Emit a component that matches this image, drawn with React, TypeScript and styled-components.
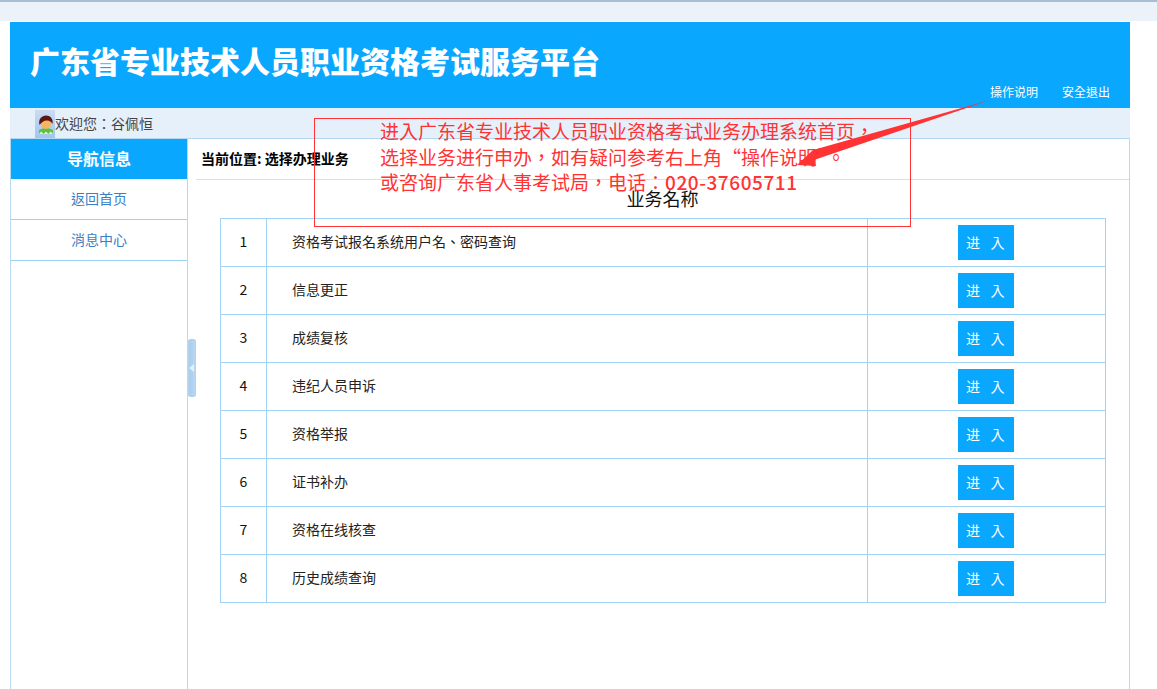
import React from "react";
import styled, { createGlobalStyle } from "styled-components";

const Global = createGlobalStyle`
  html, body { margin: 0; padding: 0; background: #fff; height: 689px; overflow: hidden; }
  body { font-family: "Noto Sans CJK TC", "Noto Sans CJK SC", "Liberation Sans", sans-serif; }
  * { box-sizing: border-box; }
`;
const Page = styled.div`position: relative; width: 1157px; height: 689px; overflow: hidden;`;
const TopStrip = styled.div`height: 21px; background: #ecf2fa; border-top: 2px solid #a9bdd3;`;
const Frame = styled.div`
  margin: 1px 27px 0 10px; height: 667px; display: flex; flex-direction: column;
`;
const Header = styled.header`
  height: 86px; flex: none; background: #0aa7ff; position: relative; padding: 21px 0 0 20px;
  display: flex; justify-content: space-between;
`;
const Title = styled.h1`margin: 0; font-size: 30px; line-height: 34px; font-weight: 900; color: #fff;`;
const Links = styled.nav`align-self: flex-end; display: flex; gap: 24px; padding: 0 20px 8px 0;`;
const TopLink = styled.span`font-size: 12px; line-height: 16px; color: #fff;`;
const WelcomeBar = styled.div`
  height: 31px; flex: none; background: #e6f0fb; border-bottom: 1px solid #b3d9f2;
  display: flex; align-items: flex-start; padding-left: 25px;
`;
const Avatar = styled.span`
  width: 20px; height: 28px; margin-top: 2px; display: block;
  background: linear-gradient(#c9dcf3, #a3c5ee);
`;
const Welcome = styled.span`font-size: 14px; line-height: 30px; color: #444;`;
const Body = styled.div`flex: 1; display: flex; min-height: 0; border-right: 1px solid #b7d9f1;`;
const Side = styled.aside`width: 178px; flex: none; border-left: 1px solid #b7d9f1; border-right: 1px solid #b7d9f1;`;
const NavHead = styled.div`
  height: 40px; background: #0aa7ff; color: #fff; font-size: 16px; font-weight: 700; padding-bottom: 2px;
  display: flex; align-items: center; justify-content: center;
`;
const NavItem = styled.div`
  height: 41px; border-bottom: 1px solid #9fd2f3; color: #3b7fc4; font-size: 14px; padding-bottom: 2px;
  display: flex; align-items: center; justify-content: center;
`;
const Main = styled.main`flex: 1; min-width: 0; padding-left: 8px;`;
const Crumb = styled.div`
  height: 41px; border-bottom: 1px solid #dcdfe2; padding-left: 5px; color: #000;
  font-size: 14px; font-weight: 700; line-height: 38px;
`;
const TableWrap = styled.div`padding: 0 24px 0 24px;`;
const Caption = styled.div`height: 38px; text-align: center; font-size: 18px; line-height: 37px; color: #111;`;
const Table = styled.table`width: 886px; border-collapse: collapse; table-layout: fixed;`;
const Row = styled.tr`height: 48px;`;
const Cell = styled.td<{ $w?: number; $align?: string; $pad?: number }>`
  border: 1px solid #9fd2f3; padding: 0 0 3px ${p => p.$pad ?? 0}px; font-size: 14px; color: #222;
  width: ${p => (p.$w ? `${p.$w}px` : "auto")}; text-align: ${p => p.$align ?? "left"};
`;
const ActionCell = styled(Cell)`padding-bottom: 0;`;
const NumText = styled.span`font-size: 14px; color: #111;`;
const Enter = styled.button`
  width: 56px; height: 35px; border: 0; padding: 0 0 2px; margin-left: -1px; background: #0aa7ff; color: #fff;
  font: 14px "Noto Sans CJK TC", "Noto Sans CJK SC", sans-serif; letter-spacing: 1.4px; white-space: pre; display: inline-block; vertical-align: middle;
`;
const Handle = styled.div`
  position: absolute; left: 188px; top: 339px; width: 8px; height: 58px; border-radius: 2px;
  background: linear-gradient(90deg, #a8cdf0, #b9d6f3); border: 1px solid #b3d3ef;
  display: flex; align-items: center; justify-content: center;
`;
const HandleArrow = styled.span`
  width: 0; height: 0; border-top: 4px solid transparent; border-bottom: 4px solid transparent;
  border-right: 5px solid #e6f0fb; margin-left: -1px;
`;
const Note = styled.div`
  position: absolute; left: 314px; top: 118px; width: 597px; height: 109px;
  border: 1px solid #f33; padding: 0 0 0 65px; color: #f33; font-size: 19px; line-height: 25.5px; white-space: nowrap;
`;
const NoteText = styled.div`margin-top: -1px;`;
const Phone = styled.span`font-weight: 500; letter-spacing: 0.55px;`;
const ArrowSvg = styled.svg`position: absolute; left: 780px; top: 90px; width: 220px; height: 100px; pointer-events: none;`;

const rows = ["资格考试报名系统用户名、密码查询", "信息更正", "成绩复核", "违纪人员申诉", "资格举报", "证书补办", "资格在线核查", "历史成绩查询"];

export default function App() {
  return (
    <Page>
      <Global />
      <TopStrip />
      <Frame>
        <Header>
          <Title>广东省专业技术人员职业资格考试服务平台</Title>
          <Links>
            <TopLink>操作说明</TopLink>
            <TopLink>安全退出</TopLink>
          </Links>
        </Header>
        <WelcomeBar>
          <Avatar>
            <svg width="20" height="28" viewBox="0 0 20 28">
              <path d="M4 24v-4c2-1 4-2 7-2s5 1 7 2v4z" fill="#5fc23c" />
              <path d="M4 24l2.300-2.500 2.300 2.500 2.400-2.500 2.400 2.500 2.300-2.500 2.300 2.500z" fill="#e4f6cf" />
              <circle cx="11" cy="14" r="5" fill="#f8b45e" />
              <path d="M4.500 15c-1.500-6 2.500-9.500 6.500-9.500s7.500 3 6.500 8.500c-1.500-2.500-3.500-4-6-3.500-2.500 0-5 1.800-7 4.500z" fill="#5a1714" />
            </svg>
          </Avatar>
          <Welcome>欢迎您：谷佩恒</Welcome>
        </WelcomeBar>
        <Body>
          <Side>
            <NavHead>导航信息</NavHead>
            <NavItem>返回首页</NavItem>
            <NavItem>消息中心</NavItem>
          </Side>
          <Main>
            <Crumb>当前位置: 选择办理业务</Crumb>
            <TableWrap>
              <Caption>业务名称</Caption>
              <Table>
                <tbody>
                  {rows.map((r, i) => (
                    <Row key={r}>
                      <Cell $w={46} $align="center"><NumText>{i + 1}</NumText></Cell>
                      <Cell $w={601} $pad={25}>{r}</Cell>
                      <ActionCell $align="center"><Enter>{"进  入"}</Enter></ActionCell>
                    </Row>
                  ))}
                </tbody>
              </Table>
            </TableWrap>
          </Main>
        </Body>
      </Frame>
      <Handle><HandleArrow /></Handle>
      <Note>
        <NoteText>
          进入广东省专业技术人员职业资格考试业务办理系统首页，<br />
          选择业务进行申办，如有疑问参考右上角“操作说明”。<br />
          或咨询广东省人事考试局，电话：<Phone>020-37605711</Phone>
        </NoteText>
      </Note>
      <ArrowSvg viewBox="0 0 220 100">
        <path d="M210 10 L33 60 L17 75 L36 76 L34 70 Z" fill="#f33" />
      </ArrowSvg>
    </Page>
  );
}
